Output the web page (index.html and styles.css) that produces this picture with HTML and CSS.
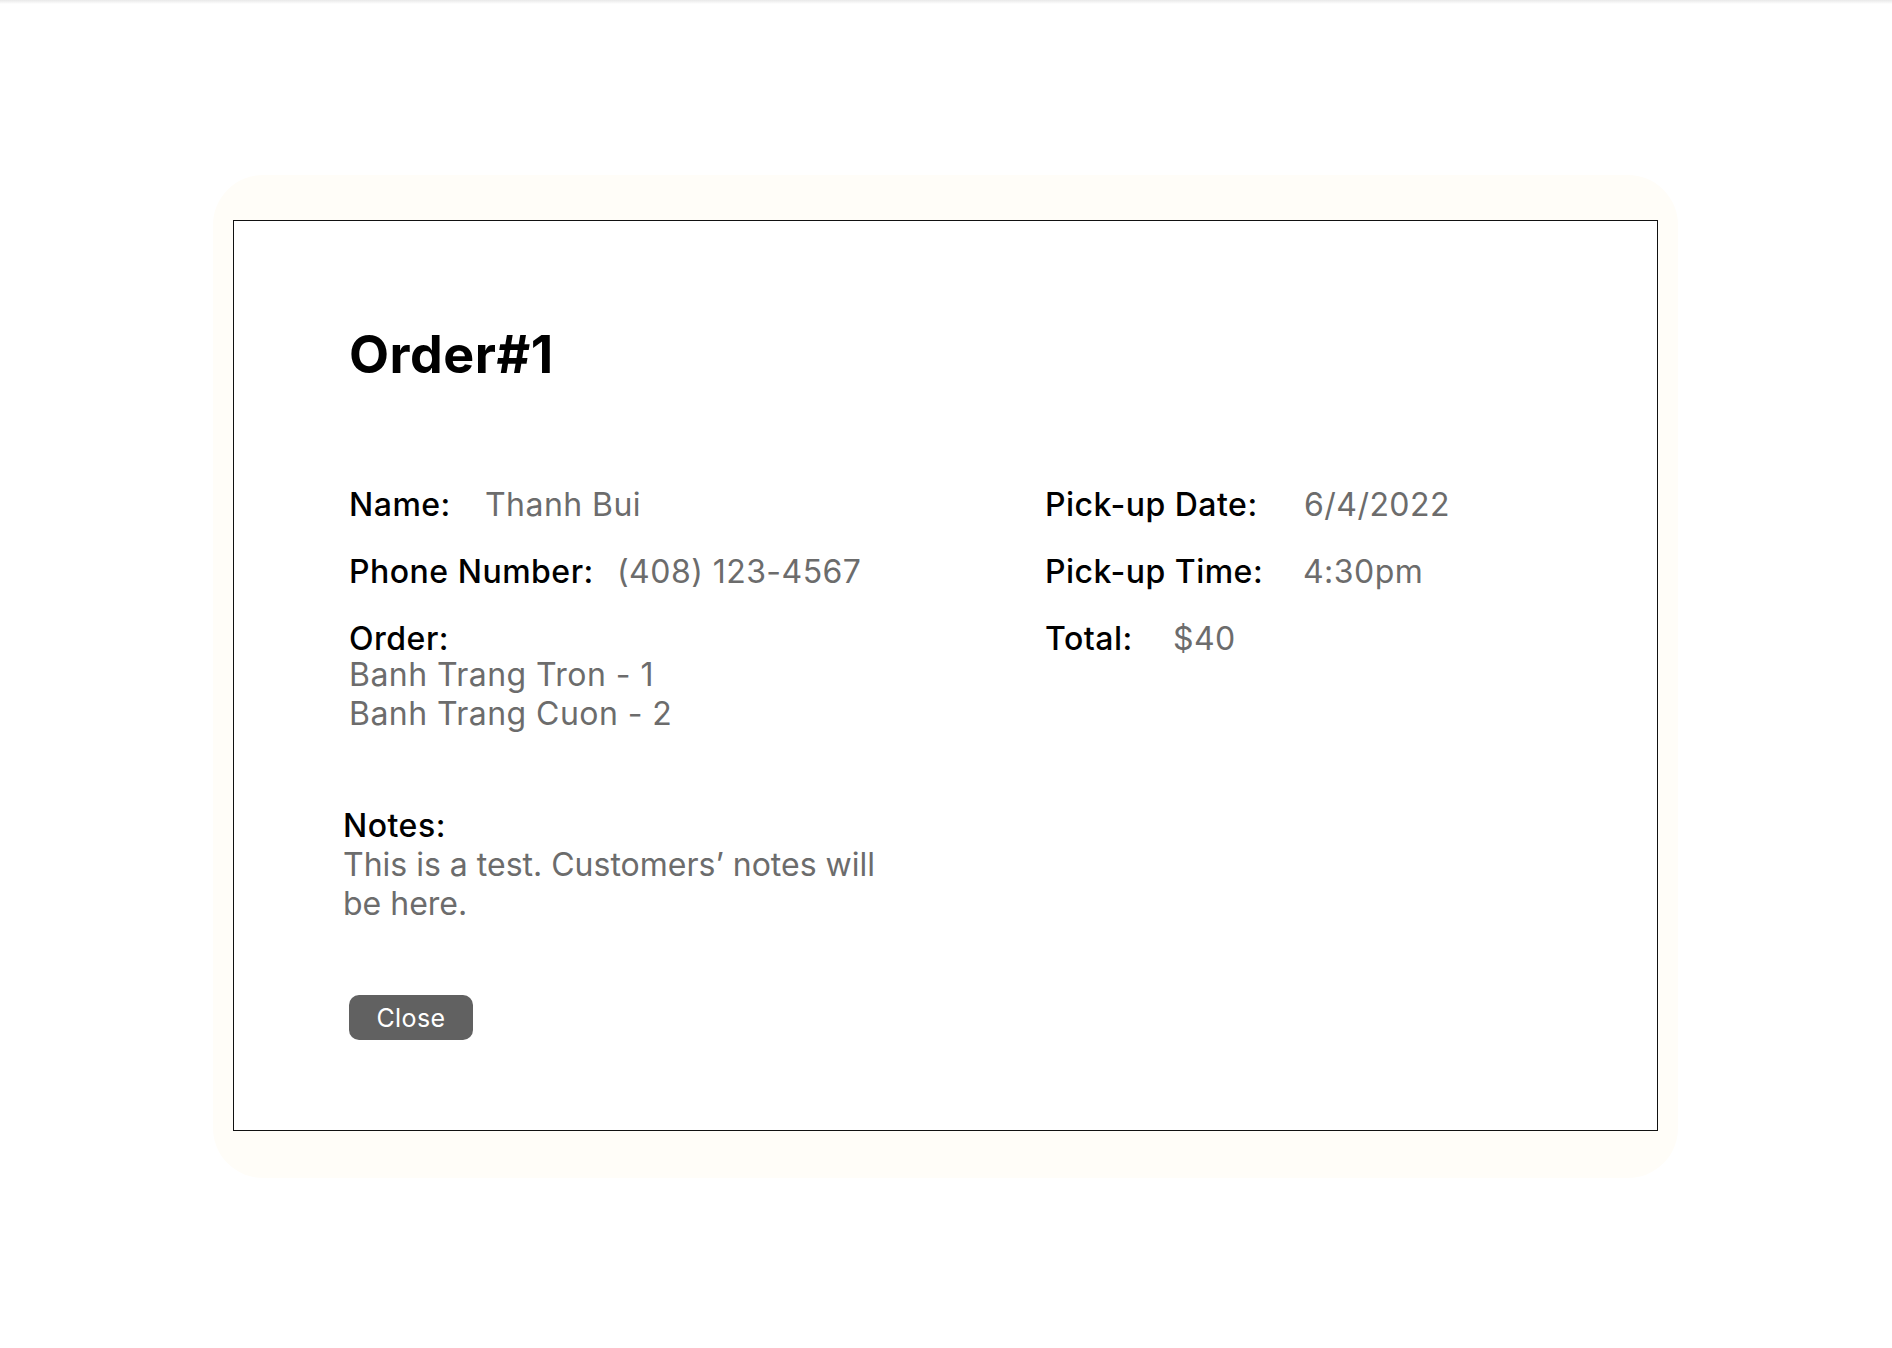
FILE: index.html
```html
<!DOCTYPE html>
<html lang="en">
<head>
<meta charset="utf-8">
<title>Order#1</title>
<link rel="stylesheet" href="styles.css">
</head>
<body>
<div class="topshade"></div>
<main class="stage">
  <div class="backdrop">
    <section class="modal">
      <h1 class="title">Order#1</h1>
      <div class="details">
        <div class="col">
          <div class="row">
            <span class="label w-name">Name:</span>
            <span class="value">Thanh Bui</span>
          </div>
          <div class="row">
            <span class="label w-phone">Phone Number:</span>
            <span class="value">(408) 123-4567</span>
          </div>
          <div class="block">
            <div class="label block-label">Order:</div>
            <div class="items">
              <div class="value">Banh Trang Tron - 1</div>
              <div class="value">Banh Trang Cuon - 2</div>
            </div>
          </div>
        </div>
        <div class="col">
          <div class="row">
            <span class="label w-date">Pick-up Date:</span>
            <span class="value">6/4/2022</span>
          </div>
          <div class="row">
            <span class="label w-time">Pick-up Time:</span>
            <span class="value">4:30pm</span>
          </div>
          <div class="row">
            <span class="label w-total">Total:</span>
            <span class="value">$40</span>
          </div>
        </div>
      </div>
      <div class="notes">
        <div class="label">Notes:</div>
        <div class="value note-text">This is a test. Customers’ notes will be here.</div>
      </div>
      <button class="close" type="button">Close</button>
    </section>
  </div>
</main>
</body>
</html>
```

FILE: styles.css
```css
html, body {
  margin: 0;
  padding: 0;
  background: #ffffff;
}

body {
  font-family: "Inter", "Noto Sans", sans-serif;
  color: #000;
  width: 1892px;
  height: 1348px;
  overflow: hidden;
}

.topshade {
  height: 4px;
  background: linear-gradient(#e9e9e9, #ffffff);
}

.stage {
  padding-top: 171px;
  padding-left: 213px;
}

.backdrop {
  width: 1465px;
  height: 1003px;
  box-sizing: border-box;
  background: #fffdf8;
  border-radius: 50px;
  padding: 45px 20px 0 20px;
}

.modal {
  box-sizing: border-box;
  width: 1425px;
  height: 911px;
  background: #ffffff;
  border: 1px solid #111;
  padding: 104px 0 0 115px;
}

.title {
  margin: 0 0 100px 0;
  font-size: 52px;
  line-height: 60px;
  font-weight: 700;
  letter-spacing: 0.5px;
}

.details {
  display: grid;
  grid-template-columns: 696px 1fr;
}

.col {
  display: flex;
  flex-direction: column;
  gap: 28px;
}

.row {
  display: flex;
  align-items: baseline;
}

.label {
  font-size: 32px;
  line-height: 39px;
  font-weight: 500;
  letter-spacing: 0.5px;
  color: #000;
}

.value {
  font-size: 32px;
  line-height: 39px;
  font-weight: 400;
  letter-spacing: 0.45px;
  color: #6c6c6c;
}

.block-label {
  line-height: 33px;
  padding-top: 3px;
}

.w-name { width: 136px; }
.w-phone { width: 268px; }
.w-date { width: 259px; }
.w-time { width: 258px; }
.w-total { width: 128px; }

.notes {
  margin: 73px 0 0 -6px;
  width: 572px;
}

.note-text {
  letter-spacing: 0;
}

.close {
  display: block;
  margin: 72px 0 0 0;
  width: 124px;
  height: 45px;
  border: 0;
  border-radius: 10px;
  background: #616161;
  color: #ffffff;
  font-family: "Inter", "Noto Sans", sans-serif;
  font-size: 25px;
  font-weight: 400;
  letter-spacing: 0.4px;
  padding: 0;
  cursor: pointer;
}
```
